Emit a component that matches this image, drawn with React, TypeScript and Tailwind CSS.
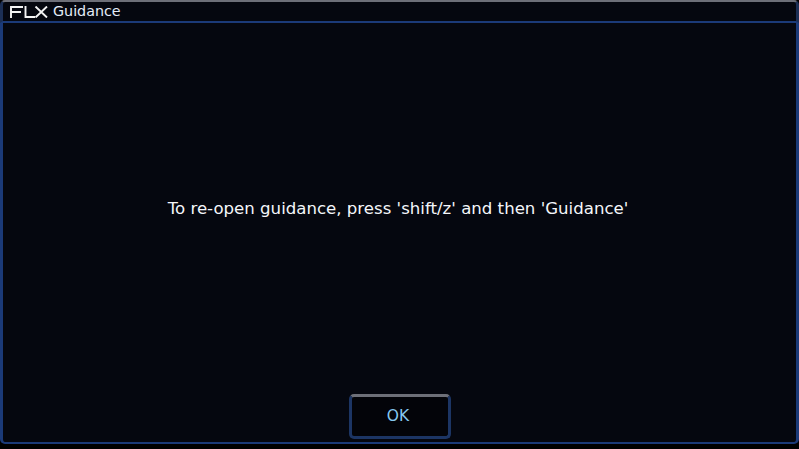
export default function App() {
  return (
    <div className="flex h-[449px] w-[799px] flex-col overflow-hidden bg-[#000000] font-['DejaVu_Sans',sans-serif] text-white">
      {/* Title bar */}
      <div className="flex h-[23px] shrink-0 items-center gap-[5px] rounded-t-[5px] border-x-[3px] border-t-2 border-b-2 border-x-[#1c2f55] border-t-[#6d6f78] border-b-[#1b3a78] bg-[#05070f] pl-[7px]">
        <svg width="38" height="12" viewBox="0 0 38 12" fill="none" stroke="#f4f4f4" strokeWidth="1.9">
          <path d="M1 12V1H13M1 6H11" />
          <path d="M15.5 0V11H25" />
          <path d="M25.5 0.5L37 11.5M37 0.5L25.5 11.5" />
        </svg>
        <span className="text-[14.3px] leading-none text-[#e4ecf8]">Guidance</span>
      </div>

      {/* Dialog body */}
      <div className="flex h-[421px] shrink-0 flex-col items-center rounded-b-[5px] border-x-[3px] border-b-2 border-[#1b3a78] bg-[#05070f]">
        <div className="flex h-[371px] shrink-0 items-center justify-center pr-[3px] pt-[2px]">
          <p className="text-[16.6px] leading-none text-[#f4f6fa]">
            To re-open guidance, press 'shift/z' and then 'Guidance'
          </p>
        </div>
        <button className="flex h-[45px] w-[102px] items-center justify-center rounded-[5px] border-[3px] border-[#1c3564] border-t-[#6d6f78] bg-[#030409] pr-[3px] text-[15.5px] text-[#86c8f0]">
          OK
        </button>
      </div>
    </div>
  );
}
